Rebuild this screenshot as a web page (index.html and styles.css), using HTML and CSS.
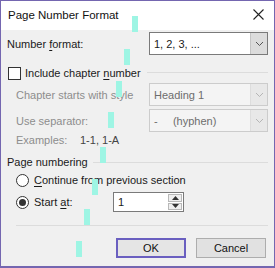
FILE: index.html
```html
<!DOCTYPE html>
<html lang="en">

<head>
  <meta charset="UTF-8">
  <meta name="viewport" content="width=device-width, initial-scale=1.0">
  <title>Page Number Format</title>
  <link rel="stylesheet" href="styles.css">
</head>

<body>
  <div class="dialog">
    <div class="titlebar">
      <span class="title">Page Number Format</span>
      <svg class="close" width="11" height="11" viewBox="0 0 11 11">
        <path d="M0.5 0.5 L10.5 10.5 M10.5 0.5 L0.5 10.5" stroke="#222" stroke-width="1.1" fill="none"/>
      </svg>
    </div>

    <div class="content">
      <div class="row row-format">
        <label>Number <u>f</u>ormat:</label>
        <div class="combo">
          <span class="combo-text">1, 2, 3, ...</span>
          <span class="combo-btn">
            <svg width="9" height="6" viewBox="0 0 9 6"><path d="M1 1 L4.5 4.5 L8 1" stroke="#555" stroke-width="1" fill="none"/></svg>
          </span>
        </div>
      </div>

      <div class="row row-check">
        <span class="checkbox"></span>
        <span class="check-label">Include chapter <u>n</u>umber</span>
        <span class="group-line"></span>
      </div>

      <div class="row row-combo">
        <label class="indent disabled">Chapter starts with style</label>
        <div class="combo combo-disabled">
          <span class="combo-text">Heading 1</span>
          <span class="combo-btn">
            <svg width="9" height="6" viewBox="0 0 9 6"><path d="M1 1 L4.5 4.5 L8 1" stroke="#b5b5b5" stroke-width="1" fill="none"/></svg>
          </span>
        </div>
      </div>

      <div class="row row-combo row-sep">
        <label class="indent disabled">Use separator:</label>
        <div class="combo combo-disabled">
          <span class="combo-text">-&nbsp;&nbsp;&nbsp;&nbsp;&nbsp;(hyphen)</span>
          <span class="combo-btn">
            <svg width="9" height="6" viewBox="0 0 9 6"><path d="M1 1 L4.5 4.5 L8 1" stroke="#b5b5b5" stroke-width="1" fill="none"/></svg>
          </span>
        </div>
      </div>

      <div class="row row-examples">
        <span class="indent disabled examples-label">Examples:</span>
        <span class="disabled-dark">1-1, 1-A</span>
      </div>

      <div class="row row-group">
        <span>Page numbering</span>
        <span class="group-line"></span>
      </div>

      <div class="row row-radio">
        <span class="radio"></span>
        <span><u>C</u>ontinue from previous section</span>
      </div>

      <div class="row row-start">
        <span class="radio radio-on"></span>
        <span class="start-label">Start <u>a</u>t:</span>
        <div class="spin">
          <span class="spin-text">1</span>
          <span class="spin-btns">
            <span class="spin-btn">
              <svg width="7" height="4" viewBox="0 0 7 4"><path d="M0 4 L3.5 0 L7 4 Z" fill="#333"/></svg>
            </span>
            <span class="spin-btn">
              <svg width="7" height="4" viewBox="0 0 7 4"><path d="M0 0 L3.5 4 L7 0 Z" fill="#333"/></svg>
            </span>
          </span>
        </div>
      </div>

      <div class="bottom-line"></div>

      <div class="buttons">
        <button class="btn btn-default">OK</button>
        <button class="btn">Cancel</button>
      </div>
    </div>

    <!-- cursor trail marks -->
    <span class="mark" style="left: 131px; top: 15px;"></span>
    <span class="mark" style="left: 123px; top: 48px;"></span>
    <span class="mark" style="left: 115px; top: 80px;"></span>
    <span class="mark" style="left: 107px; top: 111px;"></span>
    <span class="mark" style="left: 99px; top: 146px;"></span>
    <span class="mark" style="left: 91px; top: 178px;"></span>
    <span class="mark" style="left: 83px; top: 208px;"></span>
    <span class="mark" style="left: 75px; top: 240px;"></span>
  </div>
</body>

</html>
```

FILE: styles.css
```css
* {
  box-sizing: border-box;
}

body {
  margin: 0;
  font-family: "Liberation Sans", Arial, sans-serif;
  font-size: 11px;
  color: #1a1a1a;
  background-color: #f0f0f0;
}

.dialog {
  position: relative;
  width: 275px;
  height: 268px;
  border: 1px solid #7466b0;
  border-bottom-width: 2px;
  background-color: #f0f0f0;
  overflow: hidden;
}

.titlebar {
  height: 29px;
  background-color: #ffffff;
  display: flex;
  align-items: center;
  justify-content: space-between;
  padding: 0 10px 2px 7px;
}

.title {
  font-size: 11.5px;
  color: #111;
}

.content {
  padding: 0 6px 0 6px;
  display: flex;
  flex-direction: column;
}

.row {
  display: flex;
  align-items: center;
  white-space: nowrap;
}

label {
  flex: 1;
}

u {
  text-decoration-thickness: 1px;
  text-underline-offset: 2px;
}

.indent {
  padding-left: 9px;
}

.disabled {
  color: #8d8d8d;
}

.disabled-dark {
  color: #444;
}

.row-format {
  margin-top: 2px;
  height: 23px;
}

.combo {
  width: 119px;
  height: 23px;
  border: 1px solid #7a7a7a;
  background-color: #ffffff;
  display: flex;
  align-items: stretch;
}

.combo-text {
  flex: 1;
  padding-left: 4px;
  display: flex;
  align-items: center;
}

.combo-btn {
  width: 17px;
  background-color: #dcdcdc;
  border-left: 1px solid #c4c4c4;
  display: flex;
  align-items: center;
  justify-content: center;
}

.combo-disabled {
  border-color: #cccccc;
  background-color: #f4f4f4;
  color: #6d6d6d;
}

.combo-disabled .combo-btn {
  background-color: #e8e8e8;
  border-left-color: #dddddd;
}

.row-check {
  margin-top: 9px;
  height: 18px;
}

.checkbox {
  width: 13px;
  height: 13px;
  border: 1px solid #333;
  background-color: #ffffff;
  margin-left: 1px;
  margin-right: 4px;
}

.group-line {
  flex: 1;
  height: 1px;
  background-color: #dcdcdc;
  margin-left: 6px;
  margin-top: -2px;
}

.row-combo {
  height: 23px;
  margin-top: 1px;
}

.row-sep {
  margin-top: 3px;
}

.row-examples {
  height: 16px;
}

.examples-label {
  width: 73px;
}

.row-group {
  height: 16px;
  margin-top: 6px;
}

.row-group .group-line {
  margin-left: 5px;
  margin-top: 1px;
}

.radio {
  width: 13px;
  height: 13px;
  border: 1px solid #333;
  border-radius: 50%;
  background-color: #ffffff;
  margin-left: 9px;
  margin-right: 5px;
  display: flex;
  align-items: center;
  justify-content: center;
}

.radio-on::after {
  content: "";
  width: 7px;
  height: 7px;
  border-radius: 50%;
  background-color: #333;
}

.row-radio {
  height: 16px;
  margin-top: 2px;
}

.row-start {
  height: 20px;
  margin-top: 4px;
}

.start-label {
  width: 79px;
}

.spin {
  width: 71px;
  height: 20px;
  border: 1px solid #7a7a7a;
  background-color: #ffffff;
  display: flex;
  align-items: stretch;
}

.spin-text {
  flex: 1;
  padding-left: 4px;
  display: flex;
  align-items: center;
}

.spin-btns {
  width: 14px;
  margin: 1px;
  display: flex;
  flex-direction: column;
  gap: 1px;
}

.spin-btn {
  flex: 1;
  border: 1px solid #b8b8b8;
  background-color: #efefef;
  display: flex;
  align-items: center;
  justify-content: center;
}

.bottom-line {
  height: 1px;
  background-color: #dcdcdc;
  margin: 13px 0 0 9px;
}

.buttons {
  display: flex;
  justify-content: flex-end;
  gap: 10px;
  margin-top: 12px;
  padding-right: 2px;
}

.btn {
  width: 70px;
  height: 20px;
  font-family: inherit;
  font-size: 11px;
  color: #111;
  background-color: #e1e1e1;
  border: 1px solid #adadad;
  padding: 0;
}

.btn-default {
  border: 2px solid #6a5fc0;
  background-color: #e5e5e5;
}

.mark {
  position: absolute;
  width: 6px;
  height: 16px;
  background-color: #9ef5e4;
}
```
